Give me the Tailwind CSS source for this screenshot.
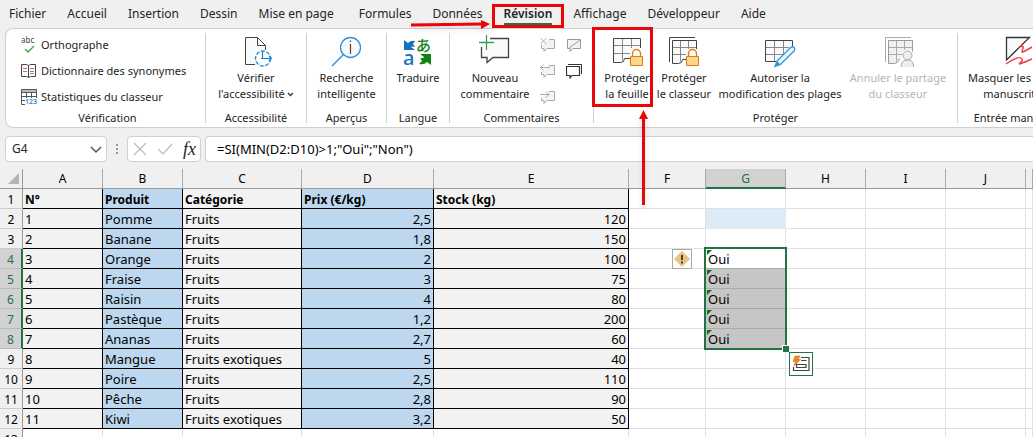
<!DOCTYPE html>
<html lang="fr">
<head>
<meta charset="utf-8">
<title>Classeur - Révision</title>
<script src="https://cdn.jsdelivr.net/npm/@tailwindcss/browser@4"></script>
</head>
<body class="h-screen overflow-hidden bg-[#f0f0f0] font-['Noto_Sans','Noto_Sans_CJK_JP',sans-serif] text-[11px] text-[#242424]">
<div class="relative flex h-full flex-col overflow-hidden">

<!-- Onglets -->
<nav class="flex h-7 shrink-0 items-center gap-[21px] pl-[9px] text-[12px] whitespace-nowrap">
  <button>Fichier</button><button>Accueil</button><button>Insertion</button><button>Dessin</button><button class="mr-1">Mise en page</button><button>Formules</button><button>Données</button>
  <button class="relative font-semibold">Révision
    <span class="absolute inset-x-0 bottom-[-2px] h-[2px] bg-[#217346]"></span>
    <span class="absolute -inset-x-[12px] -top-[1px] -bottom-[5px] border-[3px] border-[#ea0606]"></span>
    <svg class="absolute right-full top-3 mr-[13px] h-4 w-20 drop-shadow-md" viewBox="0 0 80 16"><path d="M0 8 72 7" stroke="#ea0606" stroke-width="3"/><path d="M70 3v9l9-5z" fill="#ea0606"/></svg>
  </button>
  <button>Affichage</button><button>Développeur</button><button>Aide</button>
</nav>

<!-- Ruban -->
<div class="ml-[5px] flex h-[100px] shrink-0 overflow-hidden rounded-l-lg border border-r-0 border-[#d0d0d0] bg-white whitespace-nowrap">
  <section class="flex w-[199px] shrink-0 flex-col pt-[3px]">
    <div class="flex h-[78px] flex-col pl-[15px]">
      <button class="flex h-[26px] items-center gap-1">
        <svg class="h-4 w-4 overflow-visible" viewBox="0 0 16 16"><text x="0" y="6" font-size="8" fill="#444">abc</text><path d="m4 12 3 3 6-6" fill="none" stroke="#3aa655" stroke-width="1.3"/></svg>Orthographe</button>
      <button class="flex h-[26px] items-center gap-1">
        <svg class="h-4 w-4" viewBox="0 0 16 16" fill="none" stroke="#444"><path d="M.5 1.500h5l2 1 2-1h5v12h-5l-2 1-2-1h-5zM7.500 2.500v12"/><path d="M9 8.500h4M2 8.500h4M9 10.500h4" stroke="#888"/><path d="M2 5.500h4M9 5.500h4" stroke="#e25555"/></svg>Dictionnaire des synonymes</button>
      <button class="flex h-[26px] items-center gap-1">
        <svg class="h-4 w-4 overflow-visible" viewBox="0 0 16 16" fill="none" stroke="#555"><path d="M.5.500h15v3H.5z" fill="#bbb"/><path d="M.5 1v14.500H4M.5 7.500h15M.5 11.500H4M5.500 4v5M10.500 4v5M15.500 3v6"/><text x="4" y="15" font-size="7" font-weight="600" fill="#2b88d8" stroke="none">123</text></svg>Statistiques du classeur</button>
    </div>
    <h2 class="h-4 pl-1 text-center leading-4">Vérification</h2>
  </section>
  <div class="my-1 w-px shrink-0 bg-[#d0d0d0]"></div>

  <section class="flex w-[100px] shrink-0 flex-col pt-[3px]">
    <button class="flex h-[78px] flex-col items-center pt-1 leading-4">
      <svg class="mb-[2px] h-8 w-8 shrink-0" viewBox="0 0 32 32" fill="none"><path d="M18.500 1.500h-13v27h15.500a8 8 0 0 1 4-14V9.500z" fill="#fafafa"/><path d="M15 28.500H5.500v-27h12l8 8V14M17.500 1.500v8h8" stroke="#444"/><circle cx="23" cy="22.500" r="7.500" fill="#fff" stroke="#2b95dc" stroke-width="1.400" stroke-dasharray="4 1.500"/><path d="M22.500 15v8M21 22.500h10M29 20l2.500 2.500L29 25" stroke="#1683cf" stroke-width="1.200"/></svg>
      <span>Vérifier</span><span class="flex items-center gap-[2px]">l'accessibilité<svg class="h-2 w-[7px]" viewBox="0 0 7 8"><path d="m1 3 2.500 2.500L6 3" fill="none" stroke="#333" stroke-width="1.300"/></svg></span>
    </button>
    <h2 class="h-4 text-center leading-4">Accessibilité</h2>
  </section>
  <div class="my-1 w-px shrink-0 bg-[#d0d0d0]"></div>

  <section class="flex w-[79px] shrink-0 flex-col pt-[3px]">
    <button class="flex h-[78px] flex-col items-center pt-1 leading-4">
      <svg class="mb-[2px] h-8 w-8 shrink-0" viewBox="0 0 32 32" fill="none"><circle cx="19.500" cy="11.500" r="10" fill="#fafafa" stroke="#2b95dc" stroke-width="1.300"/><path d="M12.500 18.500 1 30" stroke="#2b95dc" stroke-width="1.500"/><path d="M19.500 8v10M19.500 4.500v1.500" stroke="#444" stroke-width="1.200"/></svg>
      <span>Recherche</span><span>intelligente</span>
    </button>
    <h2 class="h-4 text-center leading-4">Aperçus</h2>
  </section>
  <div class="my-1 w-px shrink-0 bg-[#d0d0d0]"></div>

  <section class="flex w-[62px] shrink-0 flex-col pt-[3px]">
    <button class="flex h-[78px] flex-col items-center pt-1 leading-4">
      <svg class="mb-[2px] h-8 w-8 shrink-0 overflow-visible" viewBox="0 0 32 32"><path d="M2 4l4 3q3-3 7-2l-2 3 2 3q-3-1-4 0l4 3H2z" fill="#1570c0"/><path d="M29 18v11l-4-3q-3 3-8 2l3-3-2-3q3 1 4-1l-4-3z" fill="#138013"/><text x="1" y="29" font-size="20" font-weight="500" fill="#1570c0">a</text><text x="14" y="15" font-size="15" font-weight="500" fill="#138013">あ</text></svg>
      <span>Traduire</span>
    </button>
    <h2 class="h-4 text-center leading-4">Langue</h2>
  </section>
  <div class="my-1 w-px shrink-0 bg-[#d0d0d0]"></div>

  <section class="flex w-[143px] shrink-0 flex-col pt-[3px]">
    <div class="flex h-[78px] gap-2 pl-2">
      <button class="flex w-[74px] flex-col items-center pt-1 leading-4">
        <svg class="mb-[2px] h-8 w-8 shrink-0 overflow-visible" viewBox="0 0 32 32" fill="none"><path d="M2.500 2.500h27v19H14L8 27v-5.500H2.500z" fill="#fafafa"/><path d="M11 2.500h18.500v19H14L8 26.500v-5H2.500V11" stroke="#444" stroke-width="1.300"/><path d="M7.500-1v15M0 6.500h15" stroke="#fff" stroke-width="4"/><path d="M7.500-1v15M0 6.500h15" stroke="#2fa04f" stroke-width="1.300"/></svg>
        <span>Nouveau</span><span>commentaire</span>
      </button>
      <div class="grid grid-cols-2 grid-rows-3 items-center gap-x-[10px]">
        <button aria-label="Supprimer"><svg class="h-4 w-4" viewBox="0 0 16 16" fill="none" stroke="#aaa"><path d="M9 2.500h5.500v9H7l-3 3v-3H1.500V8" fill="#f3f3f3"/><path d="m.5 1 6 6m0-6-6 6"/></svg></button>
        <button aria-label="Masquer le commentaire"><svg class="h-4 w-4" viewBox="0 0 16 16" fill="none" stroke="#999"><path d="M1.500 2.500h13v9H7l-3 3v-3H1.500zM3 11 14 3" fill="#f3f3f3"/></svg></button>
        <button aria-label="Commentaire précédent"><svg class="h-4 w-4" viewBox="0 0 16 16" fill="none" stroke="#aaa"><path d="M9 2.500h5.500v9H7l-3 3v-3H1.500V9" fill="#f3f3f3"/><path d="M10 4.500H.5m3-3-3 3 3 3"/></svg></button>
        <button aria-label="Afficher les commentaires"><svg class="h-4 w-4" viewBox="0 0 16 16" fill="none" stroke="#333"><path d="M.5 3.500h13v9H6l-2 2.500v-2.500H.5z" fill="#fff" stroke-width="1.200"/><path d="M2 1.500h13.500V11"/></svg></button>
        <button aria-label="Commentaire suivant"><svg class="h-4 w-4" viewBox="0 0 16 16" fill="none" stroke="#aaa"><path d="M9 2.500h5.500v9H7l-3 3v-3H1.500V9" fill="#f3f3f3"/><path d="M0 5.500h9m-3-3 3 3-3 3"/></svg></button>
      </div>
    </div>
    <h2 class="h-4 text-center leading-4">Commentaires</h2>
  </section>
  <div class="my-1 w-px shrink-0 bg-[#d0d0d0]"></div>

  <section class="flex w-[363px] shrink-0 flex-col pt-[3px]">
    <div class="flex h-[78px] pl-[5px]">
      <button class="flex w-14 flex-col items-center pt-1 leading-4">
        <svg class="mb-[2px] h-8 w-8 shrink-0" viewBox="0 0 32 32" fill="none"><path d="M2.500 2.500h27v19H14l-4 5H2.500z" fill="#fafafa"/><path d="M2.500 9.500h27M2.500 17.500h24M11.500 2.500v22M20.500 2.500v18" stroke="#888"/><path d="M29.500 14V2.500h-27v24h7q4 0 4-4h6" stroke="#444"/><path d="M19 12h11v9H19z" fill="#fff"/><path d="M21.500 21v-3.500a4 4 0 0 1 8 0V21" stroke="#e07b10" stroke-width="1.400"/><path d="M19.500 20.500h12v9h-12z" fill="#fad78c" stroke="#e07b10"/></svg>
        <span>Protéger</span><span>la feuille</span>
      </button>
      <button class="flex w-[58px] flex-col items-center pt-1 leading-4">
        <svg class="mb-[2px] h-8 w-8 shrink-0" viewBox="0 0 32 32" fill="none"><path d="M1.500 26V1.500H27" stroke="#444"/><path d="M4.500 4.500h24v19H14l-3 4H4.500z" fill="#fafafa"/><path d="M4.500 11.500h24M4.500 18.500h22M12.500 4.500v21M20.500 4.500v18" stroke="#888"/><path d="M28.500 14V4.500h-24v23h6q4 0 4-4h4" stroke="#444"/><path d="M18 13h11v9H18z" fill="#fff"/><path d="M20.500 21v-3.500a4 4 0 0 1 8 0V21" stroke="#e07b10" stroke-width="1.400"/><path d="M18.500 20.500h12v9h-12z" fill="#fad78c" stroke="#e07b10"/></svg>
        <span>Protéger</span><span>le classeur</span>
      </button>
      <button class="flex w-[134px] flex-col items-center pt-1 leading-4">
        <svg class="mb-[2px] h-8 w-8 shrink-0" viewBox="0 0 32 32" fill="none"><path d="M1.500 4.500h27v21h-27z" fill="#fafafa"/><path d="M1.500 11.500h27M1.500 18.500h20M10.500 4.500v21M19.500 4.500v16" stroke="#888"/><path d="M28.500 10V4.500h-27v21H12" stroke="#444"/><path d="M12 27 27 9l5 4-15 18-6 1z" fill="#fff"/><path d="M11 30.500 13 25 26.500 11.500q2-1.500 3.500 0t0 3.500L16.500 28.500z" fill="#e8f4fc" stroke="#2b95dc" stroke-width="1.300"/><path d="m11 30.500 2-5.500 3.500 3.500z" fill="#2b95dc"/></svg>
        <span>Autoriser la</span><span>modification des plages</span>
      </button>
      <button class="flex w-[102px] flex-col items-center pt-1 leading-4 text-[#b5b5b5]" disabled>
        <svg class="mb-[2px] h-8 w-8 shrink-0" viewBox="0 0 32 32" fill="none" stroke="#aaa"><path d="M3.500 26V1.500H29"/><path d="M6.500 4.500h24v19H16l-3 4H6.500z" fill="#f0f0f0" stroke="none"/><path d="M6.500 11.500h24M6.500 18.500h20M14.500 4.500v21M22.500 4.500v14"/><path d="M30.500 16V4.500h-24v23h6q4 0 4-4h4" stroke="#999"/><path d="M18 31V24l4-10h8l3 17z" fill="#fff" stroke="none"/><circle cx="25.500" cy="19.500" r="4.500" fill="#eee"/><path d="M19 31q0-7 6.500-7t6 7" fill="#eee"/></svg>
        <span>Annuler le partage</span><span>du classeur</span>
      </button>
    </div>
    <h2 class="h-4 text-center leading-4">Protéger</h2>
  </section>
  <div class="my-1 w-px shrink-0 bg-[#d0d0d0]"></div>

  <section class="flex w-[122px] shrink-0 flex-col pt-[3px]">
    <button class="flex h-[78px] flex-col items-center pt-1 leading-4">
      <svg class="mb-[2px] h-8 w-8 shrink-0" viewBox="0 0 32 32" fill="none"><path d="M3.500 24V1.500h23z" fill="#fafafa" stroke="#333" stroke-width="1.300"/><path d="M16 11q5-2 4 1t-1 4 10-5M3 28q12-8 15-6t-1 5 12-4" stroke="#ee4444" stroke-width="1.500"/></svg>
      <span class="w-[102px] text-left">Masquer les</span><span class="pr-2">manuscrites</span>
    </button>
    <h2 class="h-4 pl-1 text-center leading-4">Entrée manuscrite</h2>
  </section>
</div>

<!-- Barre de formule -->
<div class="flex h-[41px] shrink-0 items-center pl-[5px] text-[13px]">
  <div class="flex h-[26px] w-[102px] items-center rounded border border-[#d0d0d0] bg-white pl-[6px] pr-1">
    <input aria-label="Zone Nom" value="G4" class="w-full min-w-0 text-[12px] outline-none">
    <button aria-label="Liste des noms"><svg class="h-3 w-3" viewBox="0 0 12 12"><path d="m1 4 5 5 5-5" fill="none" stroke="#555" stroke-width="1.500"/></svg></button>
  </div>
  <div class="flex w-5 flex-col items-center gap-[2px]"><i class="h-[2px] w-[2px] bg-[#999]"></i><i class="h-[2px] w-[2px] bg-[#999]"></i><i class="h-[2px] w-[2px] bg-[#999]"></i></div>
  <div class="flex h-[26px] w-[74px] items-center justify-between rounded border border-[#d0d0d0] bg-white pl-[5px] pr-1">
    <button aria-label="Annuler"><svg class="h-[14px] w-[14px]" viewBox="0 0 14 14"><path d="m1 1 12 12M13 1 1 13" stroke="#bbb" stroke-width="1.200"/></svg></button>
    <button aria-label="Entrer"><svg class="h-[14px] w-4" viewBox="0 0 16 14"><path d="m1 7 5 5L15 2" fill="none" stroke="#bbb" stroke-width="1.200"/></svg></button>
    <button class="font-['Liberation_Serif',serif] text-[18px] leading-5 italic" aria-label="Insérer une fonction">fx</button>
  </div>
  <input aria-label="Barre de formule" value='=SI(MIN(D2:D10)&gt;1;"Oui";"Non")' class="ml-1 h-[26px] min-w-0 flex-1 rounded-l border border-r-0 border-[#d0d0d0] bg-white pl-[11px] text-black outline-none">
</div>

<!-- Feuille -->
<table class="w-full min-w-[1033px] table-fixed border-separate border-spacing-0 text-[13px] leading-[17px] whitespace-nowrap text-black">
  <colgroup><col class="w-[23px]"><col class="w-[80px]"><col class="w-[80px]"><col class="w-[119px]"><col class="w-[132px]"><col class="w-[195px]"><col class="w-[77px]"><col class="w-[80px]"><col class="w-[80px]"><col class="w-[80px]"><col class="w-[80px]"><col></colgroup>
  <thead id="head"></thead>
  <tbody id="rows" class="bg-white"></tbody>
</table>

<!-- Annotations -->
<div class="pointer-events-none absolute left-[592px] top-[27px] h-[80px] w-[61px] border-[3px] border-[#ea0606]"></div>
<svg class="pointer-events-none absolute left-[637px] top-[108px] h-[98px] w-3 drop-shadow-md" viewBox="0 0 12 98"><path d="M6.500 8v89" stroke="#ea0606" stroke-width="3"/><path d="M2 11 6.500 2 11 11z" fill="#ea0606"/></svg>
</div>

<script>
const data = [
  ['N°','Produit','Catégorie','Prix (€/kg)','Stock (kg)'],
  ['1','Pomme','Fruits','2,5','120'], ['2','Banane','Fruits','1,8','150'],
  ['3','Orange','Fruits','2','100'], ['4','Fraise','Fruits','3','75'],
  ['5','Raisin','Fruits','4','80'], ['6','Pastèque','Fruits','1,2','200'],
  ['7','Ananas','Fruits','2,7','60'], ['8','Mangue','Fruits exotiques','5','40'],
  ['9','Poire','Fruits','2,5','110'], ['10','Pêche','Fruits','2,8','90'],
  ['11','Kiwi','Fruits exotiques','3,2','50']
];
const cols = ['A','B','C','D','E','F','G','H','I','J',''];
document.getElementById('head').innerHTML =
  '<tr><td class="h-5 border-r border-b border-[#999] p-0"><svg class="ml-2 h-3 w-3" viewBox="0 0 12 12"><path d="M11 0v11H0z" fill="#b4b4b4"/></svg></td>' +
  cols.map(c => c === 'G'
    ? '<th class="h-5 border-r border-b-2 border-r-[#aaa] border-b-[#217346] bg-[#d2d2d2] p-0 text-[12px] font-normal text-[#217346]">G</th>'
    : '<th class="h-5 border-r border-b border-r-[#aaa] border-b-[#999] p-0 text-[12px] font-normal">' + c + '</th>').join('') + '</tr>';

const selection =
  '<span class="absolute -left-[2px] -top-[2px] z-10 h-[103px] w-[83px] border-2 border-[#217346]"></span>' +
  '<span class="absolute left-[76px] top-[96px] z-20 h-[7px] w-[7px] border-t border-l border-white bg-[#217346]"></span>' +
  '<button aria-label="Analyse rapide" class="absolute left-[83px] top-[103px] z-20 h-6 w-6 border border-[#217346] bg-white"><svg class="h-[22px] w-[22px]" viewBox="0 0 22 22" fill="none"><path d="M11 4.500h8v13H3.500V14M11 7.500h5.500M6.500 14.500v-3h9.500v3zM4 17.500h15" stroke="#444" stroke-width="1.200"/><path d="M5 3h5L8 6.500h2.500L4 13l1.500-4.500H3z" fill="#f08a24" stroke="#c86010" stroke-width=".5"/></svg></button>';
const warning =
  '<button aria-label="Erreur dans la formule" class="absolute left-[43px] top-0 z-10 h-5 w-5 border border-[#aaa] bg-white"><svg class="h-[18px] w-[18px]" viewBox="0 0 18 18"><path d="m9 1 8 8-8 8-8-8z" fill="#ecc27e"/><path d="M9 5v5M9 11.500v2" stroke="#444" stroke-width="2"/></svg></button>';
const flag = '<svg class="absolute left-px top-[1px] h-[5px] w-[5px]" viewBox="0 0 5 5"><path d="M0 0h5L0 5z" fill="#107010"/></svg>';

let html = '';
for (let r = 1; r <= 13; r++) {
  const sel = r >= 4 && r <= 8;
  html += '<tr>' + (sel
    ? '<th class="h-5 border-r-2 border-b border-r-[#217346] border-b-[#bbb] bg-[#d2d2d2] p-0 pt-[2px] text-[12px] font-normal text-[#217346]">'
    : '<th class="h-5 border-r border-b border-r-[#999] border-b-[#ccc] bg-[#f0f0f0] p-0 pt-[2px] text-[12px] font-normal">') + r + '</th>';
  for (let c = 0; c < 11; c++) {
    if (c < 5 && r <= 12) {
      const blue = c === 1 || c === 3;
      html += '<td class="h-5 border-r border-b border-black px-[2px] pt-[2px] pb-0 ' + (blue ? 'bg-[#bdd7ee] ' : 'bg-[#f2f2f2] ') +
        (r === 1 ? 'text-[12px] font-bold' : c > 2 ? 'text-right' : '') + '">' + data[r - 1][c] + '</td>';
    } else if (c === 6 && sel) {
      html += '<td class="relative h-5 border-r border-b border-[#ababab] px-[2px] pt-[2px] pb-0 ' + (r === 4 ? 'bg-white' : 'bg-[#c6c6c6]') + '">' +
        flag + 'Oui' + (r === 4 ? selection : '') + '</td>';
    } else if (c === 6 && r === 2) {
      html += '<td class="h-5 border-r border-b border-[#ddebf7] bg-[#ddebf7] p-0"></td>';
    } else {
      html += '<td class="relative h-5 border-r border-b border-[#e0e0e0] p-0">' + (c === 5 && r === 4 ? warning : '') + '</td>';
    }
  }
  html += '</tr>';
}
document.getElementById('rows').innerHTML = html;
</script>
</body>
</html>
